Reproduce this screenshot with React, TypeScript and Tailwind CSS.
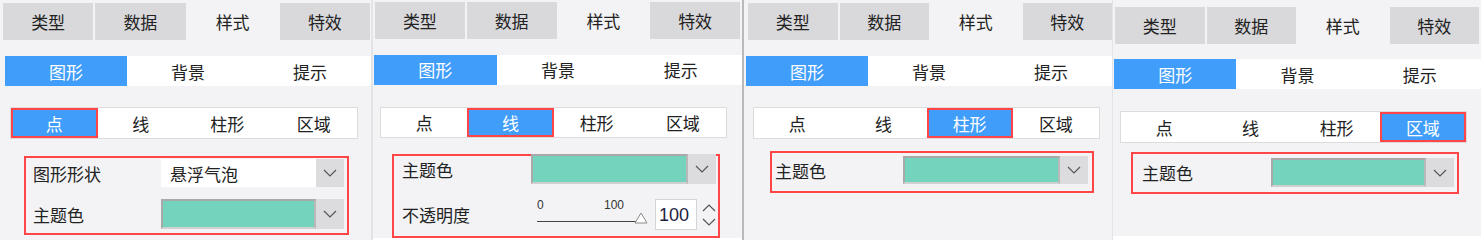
import React from 'react';
import clsx from 'clsx';

const TOP_TABS = ['类型', '数据', '样式', '特效'];
const NAV_TABS = ['图形', '背景', '提示'];
const SUB_TABS = ['点', '线', '柱形', '区域'];

function Chevron({ up = false }: { up?: boolean }) {
  return (
    <svg width="14" height="8" viewBox="0 0 14 8" className="text-[#555]">
      <polyline
        points={up ? '1,7 7,1 13,7' : '1,1 7,7 13,1'}
        fill="none"
        stroke="currentColor"
        strokeWidth="1.2"
      />
    </svg>
  );
}

// Dropdown button on the right side of select / colour fields
function DropButton() {
  return (
    <div className="flex w-[28px] items-center justify-center bg-[#dcdcdf]">
      <Chevron />
    </div>
  );
}

function ColorField({ className }: { className: string }) {
  return (
    <div className={clsx('flex', className)}>
      <div className="flex-1 border-2 border-t-[#a9a9a9] border-l-[#a9a9a9] border-r-[#b8b8b8] border-b-[#d0d0d0] bg-[#74d3bd]" />
      <DropButton />
    </div>
  );
}

function SelectField({ value, className }: { value: string; className: string }) {
  return (
    <div className={clsx('flex', className)}>
      <div className="flex flex-1 items-center bg-white pl-[9px] text-[17px] text-[#222]">{value}</div>
      <DropButton />
    </div>
  );
}

function OpacitySlider() {
  return (
    <div className="flex h-[31px] items-stretch">
      <div className="relative w-[112px]">
        <span className="absolute left-[3px] top-0 font-['Liberation_Sans',sans-serif] text-[12px] leading-none text-[#333]">0</span>
        <span className="absolute left-[70px] top-0 font-['Liberation_Sans',sans-serif] text-[12px] leading-none text-[#333]">100</span>
        <div className="absolute left-[3px] top-[22px] h-px w-[104px] bg-[#444]" />
        <svg width="14" height="12" viewBox="0 0 14 12" className="absolute left-[100px] top-[13px]">
          <polygon points="7,1 13,11 1,11" fill="#fff" stroke="#8a8a8a" strokeWidth="1" />
        </svg>
      </div>
      <div className="ml-[9px] flex w-[42px] items-center border border-[#d4d4d4] bg-white pl-[3px] font-['Liberation_Sans',sans-serif] text-[18px] text-[#1d1d3f]">
        100
      </div>
      <div className="ml-[3px] flex w-[18px] flex-col items-center justify-center gap-[6px]">
        <Chevron up />
        <Chevron />
      </div>
    </div>
  );
}

type PanelProps = {
  active: number;
  className: string;
  tabsClass: string;
  navClass: string;
  subClass: string;
  formClass: string;
  children: React.ReactNode;
};

function Panel({ active, className, tabsClass, navClass, subClass, formClass, children }: PanelProps) {
  return (
    <div className={clsx('flex shrink-0 flex-col bg-[#f3f3f5]', className)}>
      <div className={clsx('grid h-[37px] grid-cols-4 gap-[2px]', tabsClass)}>
        {TOP_TABS.map((t, i) => (
          <div
            key={t}
            className={clsx(
              'flex items-center justify-center text-[17px] text-[#222]',
              i === 2 ? 'bg-[#f3f3f5]' : 'bg-[#d9d9dc]'
            )}
          >
            {t}
          </div>
        ))}
      </div>

      <div className={clsx('grid h-[30px] grid-cols-3 bg-white', navClass)}>
        {NAV_TABS.map((t, i) => (
          <div
            key={t}
            className={clsx(
              'flex items-center justify-center text-[17px]',
              i === 0 ? 'bg-[#409dfa] text-white' : 'text-[#222]'
            )}
          >
            {t}
          </div>
        ))}
      </div>

      <div className={clsx('grid h-[32px] grid-cols-4 border border-[#dcdcdc] bg-white', subClass)}>
        {SUB_TABS.map((t, i) => (
          <div
            key={t}
            className={clsx(
              'flex items-center justify-center text-[17px]',
              i === active ? 'border-2 border-[#ff4545] bg-[#409dfa] text-white' : 'text-[#222]'
            )}
          >
            {t}
          </div>
        ))}
      </div>

      <div className={clsx('flex flex-col border-2 border-[#ff4545]', formClass)}>{children}</div>
    </div>
  );
}

export default function App() {
  return (
    <div className="flex h-[240px] w-[1481px] bg-white font-['Noto_Sans_CJK_SC','Noto_Sans',sans-serif] leading-none">
      {/* 点 */}
      <Panel
        active={0}
        className="h-[240px] w-[371px] pt-[3px]"
        tabsClass="ml-[3px] mr-px"
        navClass="ml-[5px] mt-[16px]"
        subClass="ml-[10px] mt-[21px] w-[348px]"
        formClass="ml-[24px] mt-[17px] h-[79px] w-[325px] pt-px"
      >
        <div className="flex h-[28px] items-center pl-[7px]">
          <span className="w-[128px] text-[17px] text-[#222]">图形形状</span>
          <SelectField value="悬浮气泡" className="h-[28px] w-[183px]" />
        </div>
        <div className="mt-[12px] flex h-[30px] items-center pl-[7px]">
          <span className="w-[128px] text-[17px] text-[#222]">主题色</span>
          <ColorField className="h-[30px] w-[183px]" />
        </div>
      </Panel>

      <div className="w-[2px] shrink-0 bg-[#e4e4e6]" />

      {/* 线 */}
      <Panel
        active={1}
        className="h-[238px] w-[369px] pt-[2px]"
        tabsClass="ml-[2px] mr-[2px]"
        navClass="ml-px mt-[16px]"
        subClass="ml-[7px] mt-[22px] w-[347px]"
        formClass="ml-[19px] mt-[16px] h-[84px] w-[328px]"
      >
        <div className="-mt-[2px] flex h-[30px] items-center pl-[8px]">
          <span className="w-[129px] text-[17px] text-[#222]">主题色</span>
          <ColorField className="h-[30px] w-[185px]" />
        </div>
        <div className="mt-[15px] flex h-[31px] items-center pl-[8px]">
          <span className="w-[133px] text-[17px] text-[#222]">不透明度</span>
          <OpacitySlider />
        </div>
      </Panel>

      <div className="flex w-[3px] shrink-0">
        <div className="w-[2px] bg-[#b9b9bb]" />
        <div className="w-px bg-[#f3f3f5]" />
      </div>

      {/* 柱形 */}
      <Panel
        active={2}
        className="h-[240px] w-[367px] pt-[3px]"
        tabsClass="ml-[3px]"
        navClass="ml-[1px] mt-[16px]"
        subClass="ml-[8px] mt-[21px] w-[347px]"
        formClass="ml-[25px] mt-[12px] h-[42px] w-[324px]"
      >
        <div className="mt-[3px] flex h-[28px] items-center pl-[3px]">
          <span className="w-[128px] text-[17px] text-[#222]">主题色</span>
          <ColorField className="h-[28px] w-[185px]" />
        </div>
      </Panel>

      <div className="w-px shrink-0 bg-[#e4e4e6]" />

      {/* 区域 */}
      <Panel
        active={3}
        className="h-[236px] w-[368px] pt-[7px]"
        tabsClass="ml-[2px] mr-[2px]"
        navClass="ml-px mt-[15px]"
        subClass="ml-[7px] mt-[22px] w-[347px]"
        formClass="ml-[18px] mt-[9px] h-[42px] w-[328px]"
      >
        <div className="mt-[4px] flex h-[29px] items-center pl-[9px]">
          <span className="w-[129px] text-[17px] text-[#222]">主题色</span>
          <ColorField className="h-[29px] w-[183px]" />
        </div>
      </Panel>
    </div>
  );
}
